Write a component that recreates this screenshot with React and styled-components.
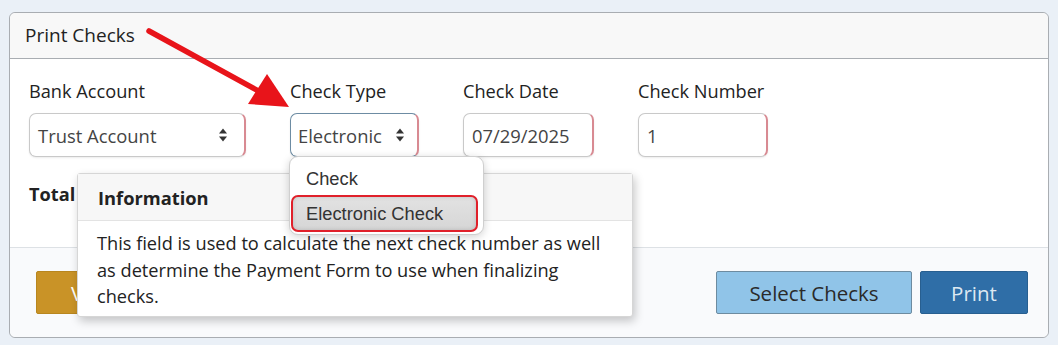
import React from 'react'
import styled, { createGlobalStyle } from 'styled-components'

const GlobalStyle = createGlobalStyle`
  html, body {
    margin: 0;
    padding: 0;
    background: #eaf0f7;
    font-family: "Open Sans", "Liberation Sans", sans-serif;
    color: #333;
  }
`

const Page = styled.div`
  width: 1058px;
  height: 345px;
  padding: 12px 9px 0 9px;
  box-sizing: border-box;
`

const Panel = styled.div`
  position: relative;
  width: 1040px;
  height: 326px;
  box-sizing: border-box;
  border: 1px solid #a9adb2;
  border-radius: 6px;
  background: #fff;
  display: flex;
  flex-direction: column;
`

const Header = styled.div`
  height: 46px;
  flex: 0 0 46px;
  box-sizing: border-box;
  background: #f8f8f8;
  border-bottom: 1px solid #a9adb2;
  border-radius: 6px 6px 0 0;
  display: flex;
  align-items: center;
  padding: 0 15px 2px;
  font-size: 19px;
  color: #222;
`

const Body = styled.div`
  flex: 0 0 189px;
  height: 189px;
  padding: 20px 20px 0 19px;
  box-sizing: border-box;
  border-bottom: 1px solid #dde1e5;
`

const FieldRow = styled.div`
  display: flex;
  gap: 44px;
`

const Field = styled.div`
  display: flex;
  flex-direction: column;
  gap: 10px;
`

const Label = styled.div`
  font-size: 18.2px;
  line-height: 24px;
  color: #222;
`

const Box = styled.div`
  width: ${p => p.$w}px;
  height: 44px;
  box-sizing: border-box;
  border: 1px solid ${p => (p.$focus ? '#6d8ca3' : '#c9c9c9')};
  border-right: 2px solid #d88a92;
  border-radius: 7px;
  display: flex;
  align-items: center;
  justify-content: space-between;
  padding: 0 ${p => (p.$focus ? 12 : 16)}px 0 ${p => (p.$focus ? 7 : 8)}px;
  font-size: 18.4px;
  color: #444;
  background: #fff;
  box-shadow: 0 1px 2px rgba(0, 0, 0, 0.08);
`

const Total = styled.div`
  margin-top: 25px;
  font-weight: 700;
  font-size: 18.2px;
  line-height: 24px;
  color: #222;
`

const Footer = styled.div`
  flex: 1;
  background: #f9fafc;
  border-radius: 0 0 6px 6px;
  display: flex;
  align-items: center;
  justify-content: space-between;
  padding: 0 20px 0 26px;
`

const Button = styled.button`
  height: 43px;
  box-sizing: border-box;
  font-family: "Open Sans", "Liberation Sans", sans-serif;
  font-size: 20.5px;
  border-radius: 2px;
  padding: 0 ${p => p.$pad}px;
  width: ${p => (p.$w ? `${p.$w}px` : 'auto')};
  background: ${p => p.$bg};
  color: ${p => p.$color};
  border: 1px solid ${p => p.$border};
  cursor: pointer;
`

const RightGroup = styled.div`
  display: flex;
  gap: 8px;
`

const Dropdown = styled.div`
  position: absolute;
  left: 279px;
  top: 143px;
  width: 195px;
  height: 79px;
  box-sizing: border-box;
  background: #fff;
  border: 1px solid #cfcfcf;
  border-radius: 9px;
  box-shadow: 0 2px 8px rgba(0, 0, 0, 0.18);
  padding: 11px 5px 0 1px;
  font-family: "Liberation Sans", Arial, sans-serif;
  font-size: 18.3px;
  color: #333;
  z-index: 3;
`

const Option = styled.div`
  box-sizing: border-box;
  display: flex;
  border-radius: 7px;
  ${p => p.$active
    ? `
    height: 37px;
    align-items: center;
    border: 2px solid #e0202a;
    background: linear-gradient(#e2e2e2, #d6d6d6);
    box-shadow: inset 0 0 4px rgba(0,0,0,0.15);
    padding-left: 13px;
  `
    : `
    height: 27px;
    align-items: flex-start;
    padding-left: 15px;
  `}
`

const Tooltip = styled.div`
  position: absolute;
  left: 67px;
  top: 160px;
  width: 556px;
  height: 144px;
  box-sizing: border-box;
  background: #fff;
  border: 1px solid #d6d6d6;
  border-radius: 3px;
  box-shadow: 2px 4px 10px rgba(0, 0, 0, 0.22);
  z-index: 2;
`

const TipHead = styled.div`
  height: 47px;
  box-sizing: border-box;
  background: #f7f7f7;
  border-bottom: 1px solid #e3e3e3;
  display: flex;
  align-items: center;
  padding-left: 20px;
  font-weight: 700;
  font-size: 18.3px;
  color: #222;
`

const TipBody = styled.div`
  padding: 9px 20px 0 19px;
  font-size: 18.2px;
  line-height: 26.5px;
  color: #222;
`

const Annotation = styled.svg`
  position: absolute;
  left: -10px;
  top: -13px;
  width: 1058px;
  height: 345px;
  pointer-events: none;
  z-index: 5;
`

function Arrows() {
  return (
    <svg width="10" height="16" viewBox="0 0 10 16">
      <path d="M5 1.5 L9 6.5 L1 6.5 Z" fill="#333" />
      <path d="M5 14.5 L9 9.5 L1 9.5 Z" fill="#333" />
    </svg>
  )
}

export default function App() {
  return (
    <Page>
      <GlobalStyle />
      <Panel>
        <Header>Print Checks</Header>
        <Body>
          <FieldRow>
            <Field>
              <Label>Bank Account</Label>
              <Box $w={217}>Trust Account<Arrows /></Box>
            </Field>
            <Field>
              <Label>Check Type</Label>
              <Box $w={129} $focus>Electronic<Arrows /></Box>
            </Field>
            <Field>
              <Label>Check Date</Label>
              <Box $w={131}>07/29/2025</Box>
            </Field>
            <Field>
              <Label>Check Number</Label>
              <Box $w={130}>1</Box>
            </Field>
          </FieldRow>
          <Total>Total</Total>
        </Body>
        <Footer>
          <Button $pad={34} $bg="#c99327" $color="#fff" $border="#b8861f">View Register</Button>
          <RightGroup>
            <Button $pad={0} $w={196} $bg="#90c4e8" $color="#2a2a2a" $border="#6d8ba0">Select Checks</Button>
            <Button $pad={0} $w={108} $bg="#2f6ea7" $color="#dde8f2" $border="#285f90">Print</Button>
          </RightGroup>
        </Footer>

        <Tooltip>
          <TipHead>Information</TipHead>
          <TipBody>
            This field is used to calculate the next check number as well
            as determine the Payment Form to use when finalizing
            checks.
          </TipBody>
        </Tooltip>

        <Dropdown>
          <Option>Check</Option>
          <Option $active>Electronic Check</Option>
        </Dropdown>

        <Annotation viewBox="0 0 1058 345">
          <line x1="149" y1="31" x2="262" y2="93" stroke="#e8141a" strokeWidth="5.5" strokeLinecap="round" />
          <polygon points="289,107 248,104 267,74" fill="#e8141a" />
        </Annotation>
      </Panel>
    </Page>
  )
}
